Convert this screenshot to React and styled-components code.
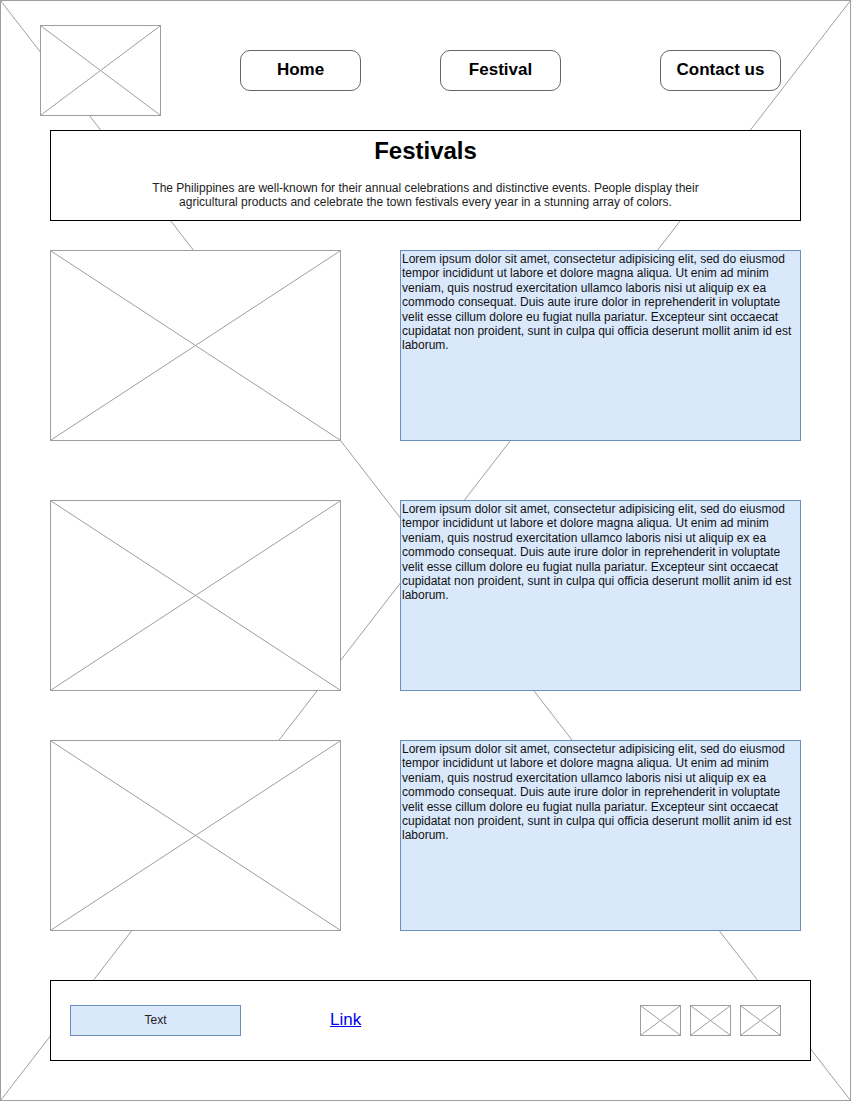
import styled, { createGlobalStyle } from "styled-components";

const GlobalStyle = createGlobalStyle`
  html, body { margin: 0; padding: 0; background: #fff; }
  body { font-family: "Liberation Sans", Arial, sans-serif; }
  * { box-sizing: border-box; }
`;

const LINE = "#9e9e9e";

const Frame = styled.div`
  position: relative;
  width: 851px;
  height: 1101px;
  border: 1px solid ${LINE};
  background: #fff;
  padding: 24px 0 0 39px;
`;

const Backdrop = styled.svg`
  position: absolute;
  top: -1px;
  left: -1px;
  width: 851px;
  height: 1101px;
  z-index: 0;
`;

const Content = styled.div`
  position: relative;
  z-index: 1;
  display: flex;
  flex-direction: column;
`;

const NavRow = styled.div`
  display: flex;
  align-items: center;
`;

const NavButton = styled.div`
  width: 121px;
  height: 41px;
  margin-left: ${(p) => p.$gap}px;
  border: 1px solid #666;
  border-radius: 10px;
  background: #fff;
  display: flex;
  align-items: center;
  justify-content: center;
  padding-bottom: 2px;
  font-weight: bold;
  font-size: 17px;
  color: #000;
`;

const Box = styled.div`
  position: relative;
  width: ${(p) => p.$w}px;
  height: ${(p) => p.$h}px;
  border: 1px solid ${LINE};
  background: #fff;
  flex: none;
`;

const Cross = styled.svg`
  position: absolute;
  inset: 0;
  width: 100%;
  height: 100%;
`;

function Placeholder({ w, h }) {
  return (
    <Box $w={w} $h={h}>
      <Cross viewBox="0 0 100 100" preserveAspectRatio="none">
        <line x1="0" y1="0" x2="100" y2="100" stroke={LINE} strokeWidth="1" vectorEffect="non-scaling-stroke" />
        <line x1="100" y1="0" x2="0" y2="100" stroke={LINE} strokeWidth="1" vectorEffect="non-scaling-stroke" />
      </Cross>
    </Box>
  );
}

const Header = styled.div`
  margin: 14px 0 0 10px;
  width: 751px;
  height: 91px;
  border: 1px solid #000;
  background: #fff;
  padding-top: 6px;
  display: flex;
  flex-direction: column;
  align-items: center;
`;

const Title = styled.h1`
  margin: 0;
  font-size: 24px;
  line-height: 28px;
  font-weight: bold;
  color: #000;
`;

const Intro = styled.p`
  margin: 16px 0 0;
  max-width: 570px;
  text-align: center;
  font-size: 12px;
  line-height: 14.4px;
  color: #222;
`;

const Row = styled.div`
  display: flex;
  margin: ${(p) => p.$top}px 0 0 10px;
  gap: 59px;
`;

const TextCard = styled.div`
  width: 401px;
  height: 191px;
  background: #dae8fc;
  border: 1px solid #6c8ebf;
  padding: 1px 2px 0 1px;
  font-size: 12px;
  line-height: 14.4px;
  color: #111;
`;

const Footer = styled.div`
  margin: 49px 0 0 10px;
  width: 761px;
  height: 81px;
  border: 1px solid #000;
  background: #fff;
  display: flex;
  align-items: center;
  padding: 0 29px 0 19px;
`;

const TextChip = styled.div`
  width: 171px;
  height: 31px;
  background: #dae8fc;
  border: 1px solid #6c8ebf;
  display: flex;
  align-items: center;
  justify-content: center;
  padding-bottom: 2px;
  font-size: 12px;
  color: #222;
`;

const FooterLink = styled.a`
  margin: 0 0 2px 89px;
  font-size: 17px;
  color: #0000ee;
  text-decoration: underline;
`;

const Icons = styled.div`
  margin-left: auto;
  display: flex;
  gap: 9px;
`;

const LOREM =
  "Lorem ipsum dolor sit amet, consectetur adipisicing elit, sed do eiusmod tempor incididunt ut labore et dolore magna aliqua. Ut enim ad minim veniam, quis nostrud exercitation ullamco laboris nisi ut aliquip ex ea commodo consequat. Duis aute irure dolor in reprehenderit in voluptate velit esse cillum dolore eu fugiat nulla pariatur. Excepteur sint occaecat cupidatat non proident, sunt in culpa qui officia deserunt mollit anim id est laborum.";

const rows = [29, 59, 49];

function App() {
  return (
    <>
      <GlobalStyle />
      <Frame>
        <Backdrop viewBox="0 0 851 1101">
          <line x1="0.5" y1="0.5" x2="850.5" y2="1100.5" stroke={LINE} strokeWidth="1" />
          <line x1="850.5" y1="0.5" x2="0.5" y2="1100.5" stroke={LINE} strokeWidth="1" />
        </Backdrop>
        <Content>
          <NavRow>
            <Placeholder w={121} h={91} />
            <NavButton $gap={79}>Home</NavButton>
            <NavButton $gap={79}>Festival</NavButton>
            <NavButton $gap={99}>Contact us</NavButton>
          </NavRow>

          <Header>
            <Title>Festivals</Title>
            <Intro>
              The Philippines are well-known for their annual celebrations and distinctive events. People display their
              agricultural products and celebrate the town festivals every year in a stunning array of colors.
            </Intro>
          </Header>

          {rows.map((top, i) => (
            <Row key={i} $top={top}>
              <Placeholder w={291} h={191} />
              <TextCard>{LOREM}</TextCard>
            </Row>
          ))}

          <Footer>
            <TextChip>Text</TextChip>
            <FooterLink href="#">Link</FooterLink>
            <Icons>
              <Placeholder w={41} h={31} />
              <Placeholder w={41} h={31} />
              <Placeholder w={41} h={31} />
            </Icons>
          </Footer>
        </Content>
      </Frame>
    </>
  );
}

export default App;
